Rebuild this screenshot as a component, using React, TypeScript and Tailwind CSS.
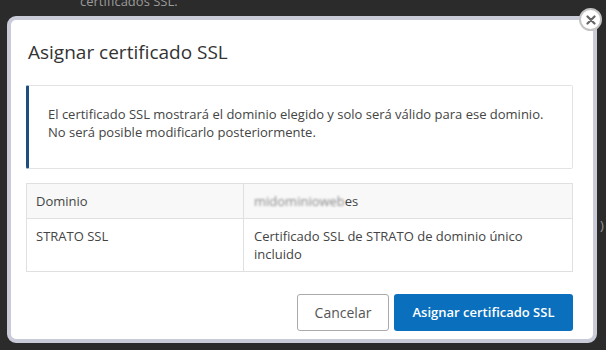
import React from "react";

export default function App() {
  const font = { fontFamily: '"Open Sans", "Noto Sans", sans-serif' };
  return (
    <div className="relative h-[350px] w-[606px] overflow-hidden bg-[#2b2b2b]" style={font}>
      <div className="absolute left-[80px] top-[-8px] text-[13px] leading-[18px] text-[#9a9a9a]">
        certificados SSL.
      </div>
      <div className="absolute left-[600px] top-[216px] text-[13px] leading-[18px] text-[#9a9a9a]">)</div>
      <div className="relative ml-[7px] mt-[16px] h-[327px] w-[590px] rounded-[9px] border-[4px] border-[#c9cbd9] bg-white pl-[15px] pr-[20px]">
        <h2 className="pt-[19px] pl-[2px] text-[19px] leading-[26px] text-[#333]">Asignar certificado SSL</h2>
        <div className="mt-[20px] h-[84px] rounded-[2px] border border-[#e3e3e3] border-l-[3px] border-l-[#1d4e7e] pl-[19px] pt-[19px] text-[13px] leading-[18px] text-[#444]">
          <p>El certificado SSL mostrará el dominio elegido y solo será válido para ese dominio.</p>
          <p>No será posible modificarlo posteriormente.</p>
        </div>
        <div className="mt-[14px] border border-[#e0e0e0] text-[13px] leading-[18px] text-[#444]">
          <div className="flex bg-[#f8f8f8]">
            <div className="w-[217px] border-r border-[#e0e0e0] px-[9px] py-[8px]">Dominio</div>
            <div className="flex-1 py-[8px] pl-[10px]">
              <span className="text-[#8a8a8a] blur-[0.8px]">midominioweb</span>
              <span>es</span>
            </div>
          </div>
          <div className="flex border-t border-[#e0e0e0] bg-white">
            <div className="w-[217px] border-r border-[#e0e0e0] px-[9px] pt-[8px] pb-[8px]">STRATO SSL</div>
            <div className="flex-1 pt-[8px] pb-[8px] pl-[10px] pr-[40px]">
              Certificado SSL de STRATO de dominio único incluido
            </div>
          </div>
        </div>
        <div className="mt-[22px] flex justify-end gap-[5px]">
          <button className="h-[37px] w-[92px] rounded-[3px] border border-[#aaa] bg-white text-[14px] text-[#555]">
            Cancelar
          </button>
          <button className="h-[37px] w-[179px] rounded-[3px] bg-[#0a6fbd] text-[13px] font-semibold text-white">
            Asignar certificado SSL
          </button>
        </div>
      </div>
      <div className="absolute left-[579px] top-[8px] flex h-[23px] w-[23px] items-center justify-center rounded-full border-[2px] border-[#c4c4c4] bg-white">
        <svg width="10" height="10" viewBox="0 0 10 10">
          <path d="M1.5 1.5 L8.5 8.5 M8.5 1.5 L1.5 8.5" stroke="#666" strokeWidth="2.2" strokeLinecap="round" />
        </svg>
      </div>
    </div>
  );
}
